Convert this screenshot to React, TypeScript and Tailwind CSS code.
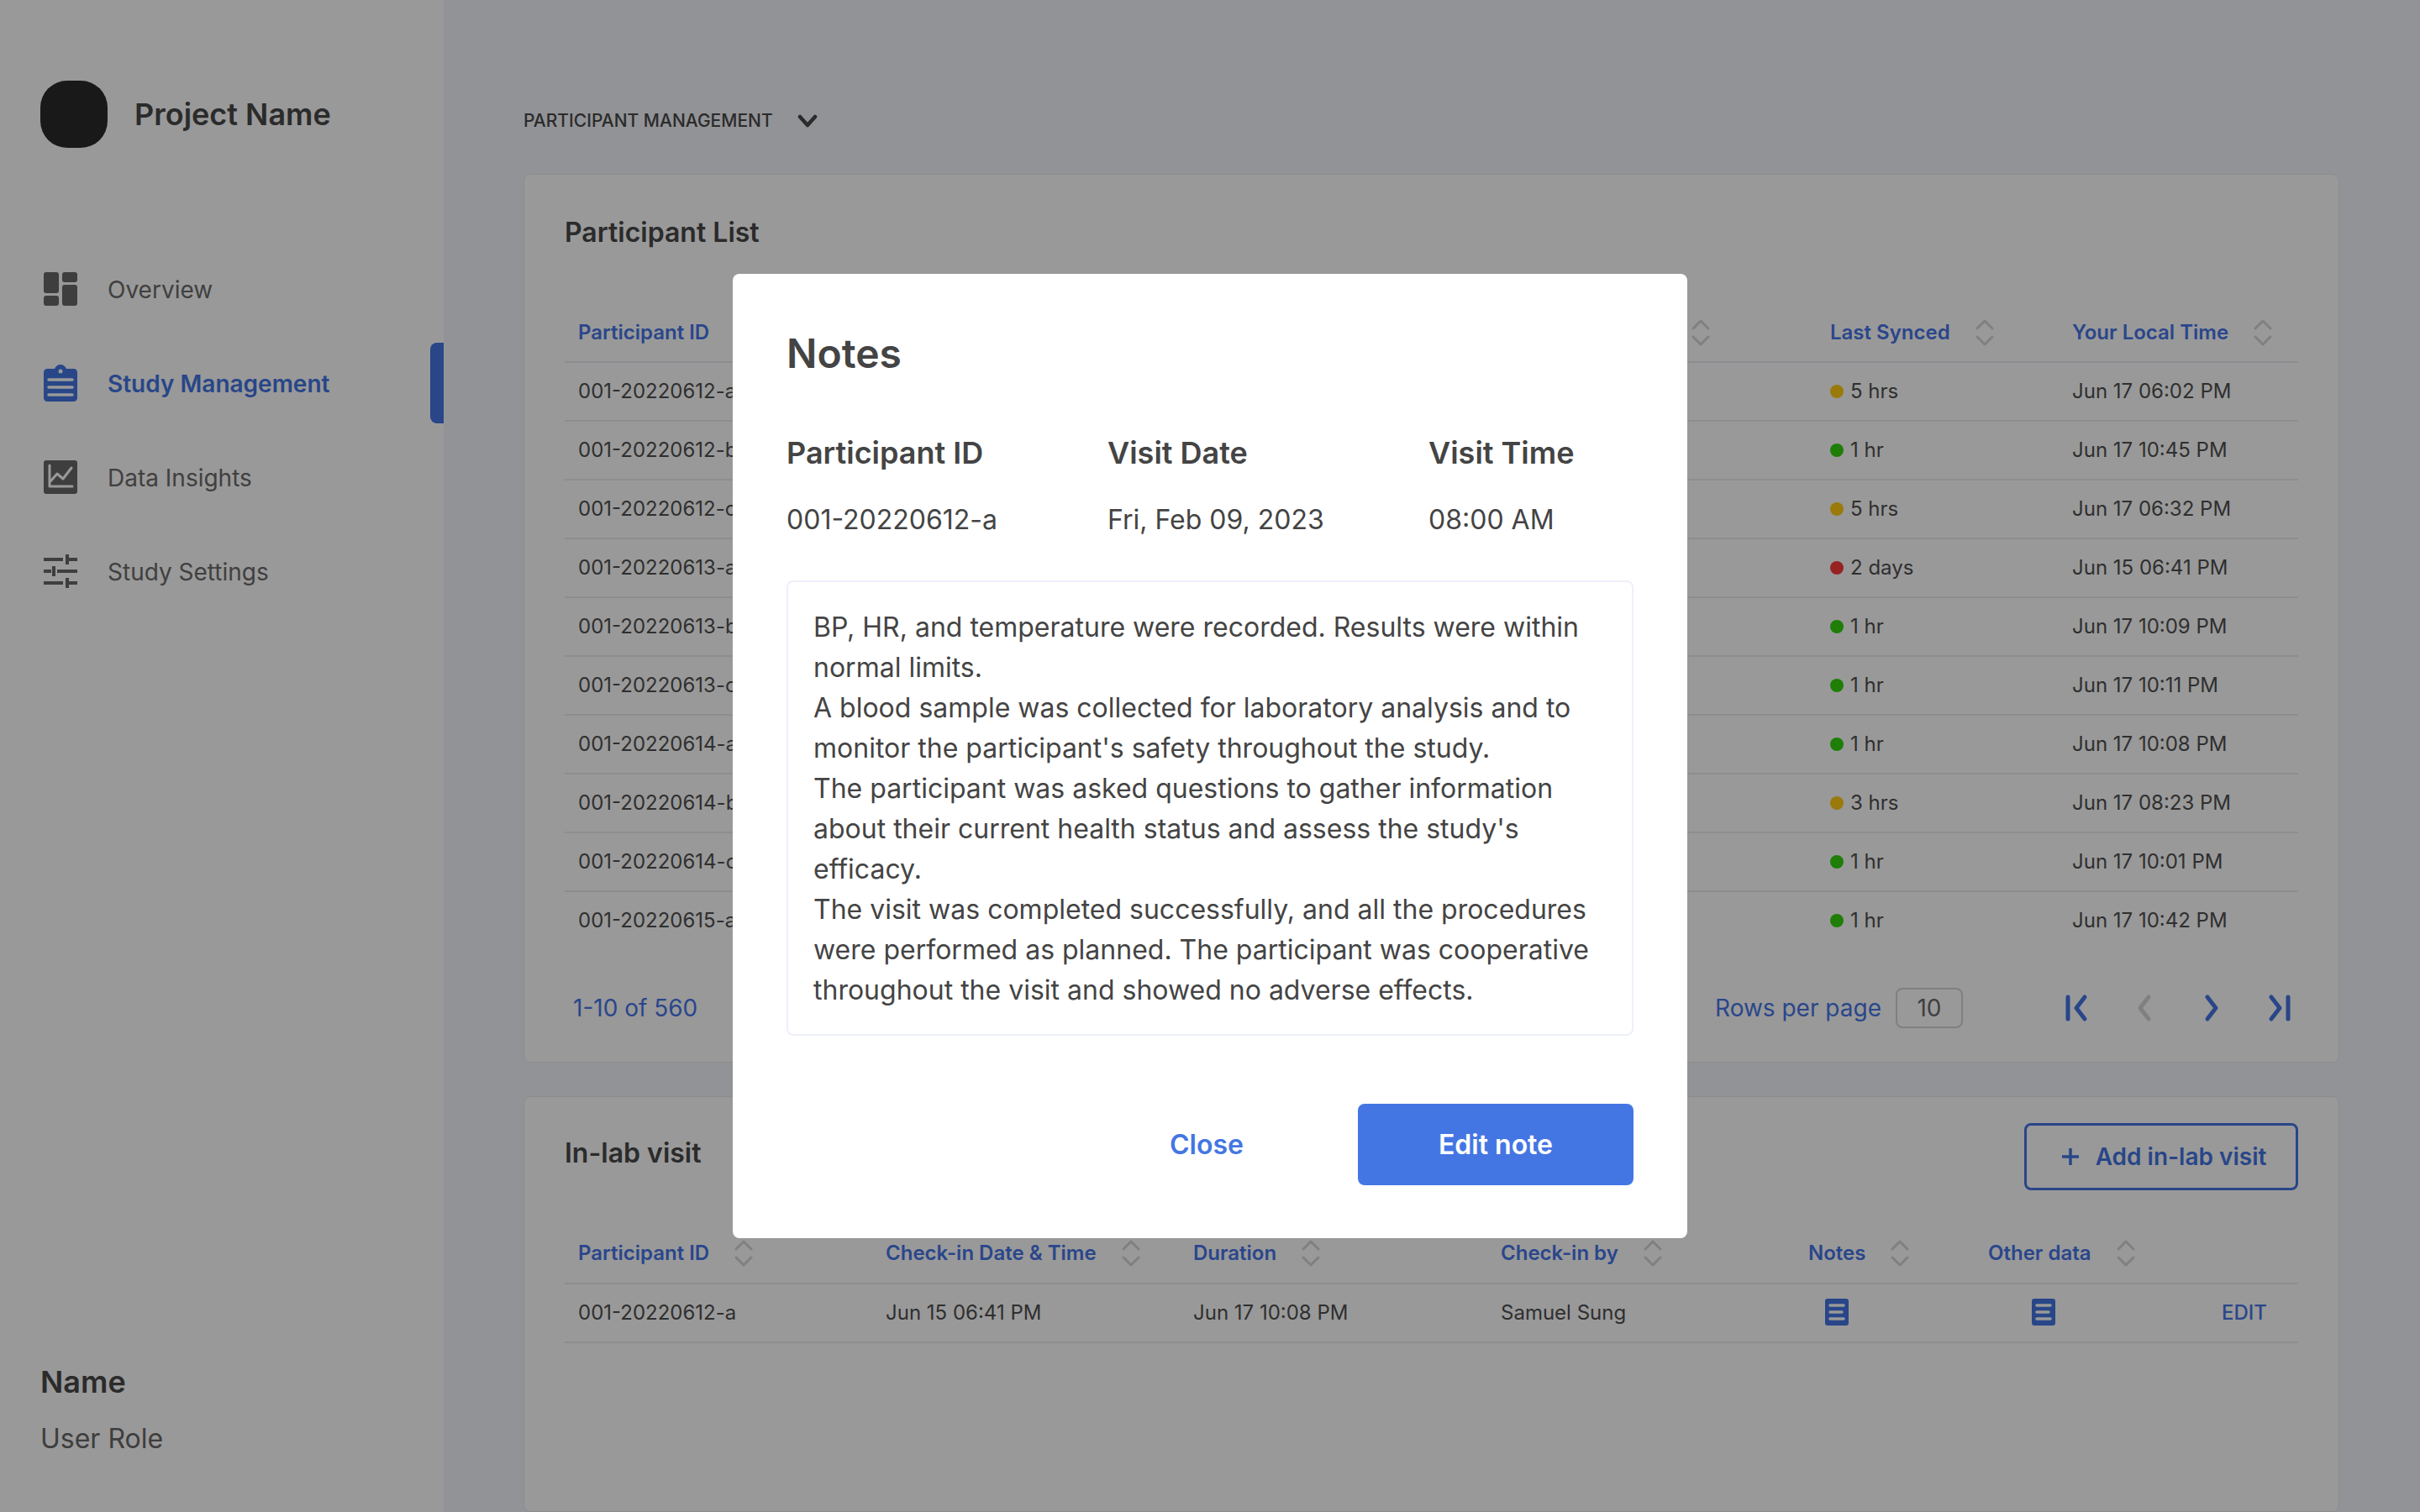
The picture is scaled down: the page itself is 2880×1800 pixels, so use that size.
import { ReactNode } from "react";

const participants = [
  { id: "001-20220612-a", sync: "5 hrs", dot: "bg-[#ffcc12]", local: "Jun 17 06:02 PM" },
  { id: "001-20220612-b", sync: "1 hr", dot: "bg-[#32d30c]", local: "Jun 17 10:45 PM" },
  { id: "001-20220612-c", sync: "5 hrs", dot: "bg-[#ffcc12]", local: "Jun 17 06:32 PM" },
  { id: "001-20220613-a", sync: "2 days", dot: "bg-[#fb3a3a]", local: "Jun 15 06:41 PM" },
  { id: "001-20220613-b", sync: "1 hr", dot: "bg-[#32d30c]", local: "Jun 17 10:09 PM" },
  { id: "001-20220613-c", sync: "1 hr", dot: "bg-[#32d30c]", local: "Jun 17 10:11 PM" },
  { id: "001-20220614-a", sync: "1 hr", dot: "bg-[#32d30c]", local: "Jun 17 10:08 PM" },
  { id: "001-20220614-b", sync: "3 hrs", dot: "bg-[#ffcc12]", local: "Jun 17 08:23 PM" },
  { id: "001-20220614-c", sync: "1 hr", dot: "bg-[#32d30c]", local: "Jun 17 10:01 PM" },
  { id: "001-20220615-a", sync: "1 hr", dot: "bg-[#32d30c]", local: "Jun 17 10:42 PM" },
];

function SortIcon() {
  return (
    <svg width="22" height="32" viewBox="0 0 22 32" fill="none" stroke="#d6d6d6" strokeWidth="3" strokeLinecap="round" strokeLinejoin="round">
      <path d="M2 11 L11 2 L20 11" />
      <path d="M2 21 L11 30 L20 21" />
    </svg>
  );
}

function HeaderCell({ label }: { label: string }) {
  return (
    <div className="flex items-center gap-[30px] text-[24px] font-semibold text-[#4675e8]">
      <span>{label}</span>
      <SortIcon />
    </div>
  );
}

function DashboardIcon() {
  return (
    <svg width="40" height="40" viewBox="0 0 40 40" fill="#686868">
      <rect x="0" y="0" width="18" height="25" rx="3" />
      <rect x="0" y="28" width="18" height="12" rx="3" />
      <rect x="22" y="0" width="18" height="12" rx="3" />
      <rect x="22" y="15" width="18" height="25" rx="3" />
    </svg>
  );
}

function ClipboardIcon() {
  return (
    <svg width="40" height="44" viewBox="0 0 40 44" fill="none">
      <path d="M4 5 H13 C14 2 17 0 20 0 C23 0 26 2 27 5 H36 C38 5 40 7 40 9 V40 C40 42 38 44 36 44 H4 C2 44 0 42 0 40 V9 C0 7 2 5 4 5 Z" fill="#4476e3" />
      <circle cx="20" cy="8" r="2.5" fill="white" />
      <path d="M6 18 H34 M6 27 H34 M6 36 H34" stroke="white" strokeWidth="3.5" strokeLinecap="round" />
    </svg>
  );
}

function ChartIcon() {
  return (
    <svg width="40" height="40" viewBox="0 0 40 40" fill="none">
      <rect width="40" height="40" rx="3" fill="#686868" />
      <path d="M7 6 V31 H34" stroke="white" strokeWidth="3" strokeLinecap="round" strokeLinejoin="round" />
      <path d="M8 25 L16 16 L23 22 L33 9" stroke="white" strokeWidth="3" strokeLinecap="round" strokeLinejoin="round" />
    </svg>
  );
}

function TuneIcon() {
  return (
    <svg width="40" height="40" viewBox="0 0 40 40" fill="none" stroke="#686868" strokeWidth="4">
      <path d="M0 6 H23 M30 6 H40 M28 0 V12" />
      <path d="M0 20 H9 M16 20 H40 M12 14 V26" />
      <path d="M0 34 H23 M30 34 H40 M28 28 V40" />
    </svg>
  );
}

function NoteIcon() {
  return (
    <svg className="-mt-0.5" width="28" height="32" viewBox="0 0 28 32" fill="none">
      <rect width="28" height="32" rx="3" fill="#4476e3" />
      <path d="M6 8 H22 M6 16 H20 M6 24 H22" stroke="white" strokeWidth="3.5" strokeLinecap="round" />
    </svg>
  );
}

function PageIcon({ d, off }: { d: string; off?: boolean }) {
  return (
    <svg width="40" height="40" viewBox="0 0 40 40" fill="none" stroke={off ? "#d6d6d6" : "#4476e3"} strokeWidth="5" strokeLinecap="round" strokeLinejoin="round">
      <path d={d} />
    </svg>
  );
}

function NavItem({ icon, label, active }: { icon: ReactNode; label: string; active?: boolean }) {
  return (
    <div className="relative flex h-[112px] items-center">
      <div className="ml-[52px] flex w-[76px] shrink-0 items-center">{icon}</div>
      <span className={active ? "mt-[2px] text-[28px] font-semibold text-[#4476e3]" : "mt-[2px] text-[28px] text-[#6b6b6b]"}>{label}</span>
      {active && <div className="absolute right-0 top-2 h-[96px] w-4 rounded-l-lg bg-[#4476e3]" />}
    </div>
  );
}

function Sidebar() {
  return (
    <aside className="flex h-full w-[528px] shrink-0 flex-col bg-white pt-[96px] pb-[67px]">
      <div className="flex items-center gap-8 pl-12">
        <div className="h-20 w-20 rounded-[32px] bg-[#2a2a2a]" />
        <span className="text-[36px] font-semibold text-[#484848]">Project Name</span>
      </div>
      <nav className="mt-[112px]">
        <NavItem icon={<DashboardIcon />} label="Overview" />
        <NavItem icon={<ClipboardIcon />} label="Study Management" active />
        <NavItem icon={<ChartIcon />} label="Data Insights" />
        <NavItem icon={<TuneIcon />} label="Study Settings" />
      </nav>
      <div className="mt-auto pl-12">
        <div className="text-[36px] leading-[44px] font-semibold text-[#484848]">Name</div>
        <div className="mt-[26px] text-[32px] leading-[40px] text-[#686868]">User Role</div>
      </div>
    </aside>
  );
}

function ParticipantCard() {
  return (
    <section className="rounded-lg border border-[#e8e9ec] bg-white px-12 pt-[49px] pb-[40px]">
      <h2 className="text-[32px] leading-[40px] font-semibold text-[#484848]">Participant List</h2>
      <div className="mt-[64px] grid h-[71px] grid-cols-[380px_1110px_288px_1fr] items-center border-b-2 border-[#e9ecf2] pl-4">
        <HeaderCell label="Participant ID" />
        <div className="pl-[945px]"><SortIcon /></div>
        <HeaderCell label="Last Synced" />
        <HeaderCell label="Your Local Time" />
      </div>
      {participants.map((p, i) => (
        <div
          key={p.id}
          className={
            i < participants.length - 1
              ? "grid h-[70px] grid-cols-[380px_1110px_288px_1fr] items-center border-b-2 border-[#e9ecf2] pl-4 text-[24px] text-[#4f4f4f]"
              : "grid h-[70px] grid-cols-[380px_1110px_288px_1fr] items-center border-b-2 border-transparent pl-4 text-[24px] text-[#4f4f4f]"
          }
        >
          <span>{p.id}</span>
          <span />
          <span className="flex items-center gap-2">
            <span className={`h-4 w-4 rounded-full ${p.dot}`} />
            {p.sync}
          </span>
          <span>{p.local}</span>
        </div>
      ))}
      <div className="mt-[44px] flex h-12 items-center pl-[10px]">
        <span className="text-[28px] text-[#4675e8]">1-10 of 560</span>
        <span className="ml-auto text-[28px] text-[#4675e8]">Rows per page</span>
        <span className="ml-[17px] flex h-12 w-20 items-center justify-center rounded-lg border-2 border-[#d6d6d6] text-[28px] text-[#6b6b6b]">10</span>
        <div className="mr-[3px] ml-[116px] flex gap-10">
          <PageIcon d="M9 7 V33 M29 7 L19 20 L29 33" />
          <PageIcon off d="M25 7 L15 20 L25 33" />
          <PageIcon d="M15 7 L25 20 L15 33" />
          <PageIcon d="M11 7 L21 20 L11 33 M31 7 V33" />
        </div>
      </div>
    </section>
  );
}

function VisitCard() {
  return (
    <section className="mt-[40px] flex-1 rounded-lg border border-[#e8e9ec] bg-white px-12 pt-[31px]">
      <div className="flex items-start justify-between">
        <h2 className="mt-4 text-[32px] leading-[40px] font-semibold text-[#484848]">In-lab visit</h2>
        <button className="flex h-20 w-[326px] items-center justify-center gap-[18px] rounded-lg border-[3px] border-[#4476e3] pl-[5px] text-[28px] font-semibold text-[#4476e3]">
          <svg width="24" height="24" viewBox="0 0 24 24" fill="none" stroke="#4476e3" strokeWidth="3.5">
            <path d="M12 2 V22 M2 12 H22" />
          </svg>
          Add in-lab visit
        </button>
      </div>
      <div className="mt-[40px] grid h-[72px] grid-cols-[366px_366px_366px_366px_214px_1fr] items-center border-b-2 border-[#e9ecf2] pl-4">
        <HeaderCell label="Participant ID" />
        <HeaderCell label="Check-in Date & Time" />
        <HeaderCell label="Duration" />
        <HeaderCell label="Check-in by" />
        <HeaderCell label="Notes" />
        <HeaderCell label="Other data" />
      </div>
      <div className="grid h-[70px] grid-cols-[366px_366px_366px_366px_214px_1fr] items-center border-b-2 border-[#e9ecf2] pl-4 text-[24px] text-[#4f4f4f]">
        <span>001-20220612-a</span>
        <span>Jun 15 06:41 PM</span>
        <span>Jun 17 10:08 PM</span>
        <span>Samuel Sung</span>
        <span className="pl-5"><NoteIcon /></span>
        <div className="flex items-center justify-between pr-[37px] pl-[52px]">
          <NoteIcon />
          <span className="font-medium text-[#4675e8]">EDIT</span>
        </div>
      </div>
    </section>
  );
}

function NotesModal() {
  return (
    <div className="fixed inset-0 flex items-center justify-center bg-black/40">
      <div className="w-[1136px] rounded-lg bg-white px-16 pt-[66px] pb-[63px] text-[#444444]">
        <h1 className="text-[48px] leading-[58px] font-semibold">Notes</h1>
        <div className="mt-[67px] grid grid-cols-[382px_382px_1fr]">
          <div className="text-[36px] leading-[44px] font-semibold">Participant ID</div>
          <div className="text-[36px] leading-[44px] font-semibold">Visit Date</div>
          <div className="text-[36px] leading-[44px] font-semibold">Visit Time</div>
          <div className="mt-[38px] text-[32px] leading-[40px]">001-20220612-a</div>
          <div className="mt-[38px] text-[32px] leading-[40px]">Fri, Feb 09, 2023</div>
          <div className="mt-[38px] text-[32px] leading-[40px]">08:00 AM</div>
        </div>
        <div className="mt-[52px] rounded-lg border-2 border-[#eef0fa] px-[30px] pt-[30px] pb-[28px] text-[32px] leading-[48px]">
          <p>BP, HR, and temperature were recorded. Results were within normal limits.</p>
          <p>A blood sample was collected for laboratory analysis and to monitor the participant's safety throughout the study.</p>
          <p>The participant was asked questions to gather information about their current health status and assess the study's efficacy.</p>
          <p>The visit was completed successfully, and all the procedures were performed as planned. The participant was cooperative throughout the visit and showed no adverse effects.</p>
        </div>
        <div className="mt-[81px] flex justify-end gap-12">
          <button className="w-[264px] text-[32px] font-semibold text-[#4476e3]">Close</button>
          <button className="h-[97px] w-[328px] rounded-lg bg-[#4476e3] text-[32px] font-semibold text-white">Edit note</button>
        </div>
      </div>
    </div>
  );
}

export default function App() {
  return (
    <div className="flex h-screen overflow-hidden bg-[#f3f5fa] font-['Inter',sans-serif]">
      <Sidebar />
      <main className="flex h-full flex-1 flex-col pr-[96px] pl-[95px]">
        <div className="flex h-[207px] items-start pt-[129px]">
          <div className="flex h-[30px] items-center gap-[29px]">
            <span className="text-[21px] font-medium text-[#484848]">PARTICIPANT MANAGEMENT</span>
            <svg width="24" height="16" viewBox="0 0 24 16" fill="none" stroke="#484848" strokeWidth="4.5" strokeLinecap="round" strokeLinejoin="round">
              <path d="M3 3 L12 13 L21 3" />
            </svg>
          </div>
        </div>
        <ParticipantCard />
        <VisitCard />
      </main>
      <NotesModal />
    </div>
  );
}
